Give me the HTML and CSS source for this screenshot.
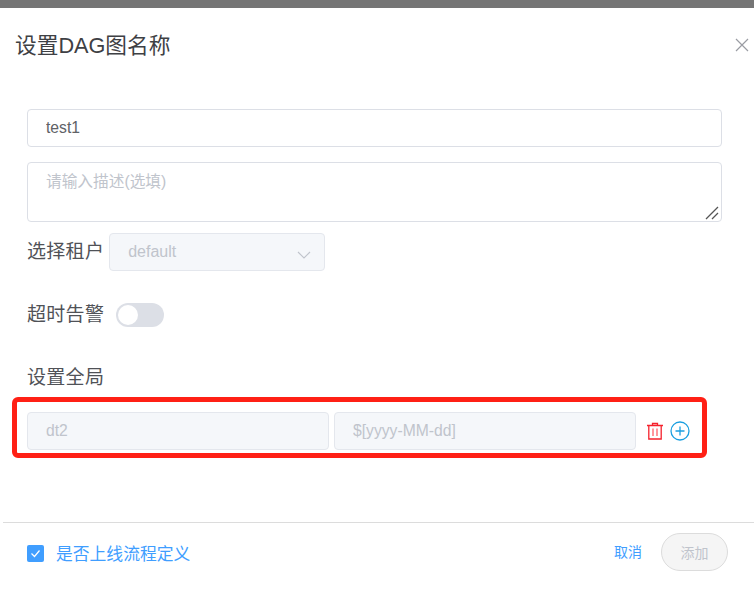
FILE: index.html
```html
<!DOCTYPE html>
<html lang="en">
<head>
    <meta charset="UTF-8">
    <meta name="viewport" content="width=device-width, initial-scale=1.0">
    <title>设置DAG图名称</title>
    <link rel="stylesheet" href="styles.css">
</head>
<body>
    <div class="mask-bar"></div>
    <div class="dialog">
        <div class="header">
            <h2 class="title">设置DAG图名称</h2>
            <svg class="close" width="14" height="14" viewBox="0 0 14 14">
                <path d="M1 1L13 13M13 1L1 13" stroke="#9a9ca3" stroke-width="1.2" fill="none"/>
            </svg>
        </div>

        <div class="form">
            <input class="field name-field" type="text" value="test1">
            <div class="desc-box">
                <textarea class="field desc-field" placeholder="请输入描述(选填)"></textarea>
                <svg class="resizer" width="14" height="14" viewBox="0 0 14 14">
                    <path d="M1 13L13 1M7 13L13 7" stroke="#555" stroke-width="1.3" fill="none"/>
                </svg>
            </div>

            <div class="row tenant-row">
                <span class="label">选择租户</span>
                <div class="select">
                    <span>default</span>
                    <svg class="arrow" width="14" height="8" viewBox="0 0 14 8">
                        <path d="M1 1L7 7L13 1" stroke="#c0c4cc" stroke-width="1.1" fill="none"/>
                    </svg>
                </div>
            </div>

            <div class="row alarm-row">
                <span class="label">超时告警</span>
                <span class="switch"><span class="knob"></span></span>
            </div>

            <div class="label global-label">设置全局</div>

            <div class="highlight">
                <input class="field global-field" type="text" placeholder="dt2" disabled>
                <input class="field global-field value-field" type="text" placeholder="$[yyyy-MM-dd]" disabled>
                <svg class="trash" width="18" height="18" viewBox="0 0 18 18" fill="none" stroke="#f5222d" stroke-width="1.3">
                    <path d="M1 3.5H17M6.5 3.5V1.5H11.5V3.5M2.8 3.5V17H15.2V3.5"/>
                    <path d="M7 6.5V14M11 6.5V14" stroke="#ff7d85" stroke-width="1.6"/>
                </svg>
                <svg class="plus" width="20" height="20" viewBox="0 0 20 20" fill="none" stroke="#1a9fe0" stroke-width="1.3">
                    <circle cx="10" cy="10" r="9"/>
                    <path d="M5.5 10H14.5M10 5.5V14.5"/>
                </svg>
            </div>
        </div>

        <div class="footer">
            <label class="online">
                <span class="checkbox">
                    <svg width="17" height="17" viewBox="0 0 17 17">
                        <path d="M4.5 8.5L7.5 11.5L12.5 5.5" stroke="#fff" stroke-width="1.2" fill="none"/>
                    </svg>
                </span>
                <span>是否上线流程定义</span>
            </label>
            <a class="cancel">取消</a>
            <button class="add" disabled>添加</button>
        </div>
    </div>
</body>
</html>
```

FILE: styles.css
```css
*{
    box-sizing: border-box;
    margin: 0;
    padding: 0;
    font-family: "Liberation Sans", "Noto Sans CJK SC", sans-serif;
}
body{
    width: 754px;
    height: 597px;
    overflow: hidden;
    background-color: #fff;
}
.mask-bar{
    height: 8px;
    background-color: #757575;
}
.header{
    display: flex;
    align-items: center;
    justify-content: space-between;
    height: 74px;
    padding: 0 5px 0 15px;
}
.title{
    margin-top: 2px;
    font-size: 21.7px;
    font-weight: normal;
    line-height: 30px;
    color: #3e4044;
}
.form{
    padding: 27px 32px 0 27px;
}
.field{
    display: block;
    width: 100%;
    height: 38px;
    padding: 0 18px;
    font-size: 15.7px;
    color: #606266;
    background-color: #fff;
    border: 1px solid #dcdfe6;
    border-radius: 4px;
    outline: none;
}
.field::placeholder{
    color: #c0c4cc;
    opacity: 1;
}
.desc-box{
    position: relative;
    margin-top: 15px;
}
.desc-field{
    height: 60px;
    padding: 8px 18px;
    line-height: 21px;
    resize: none;
}
.resizer{
    position: absolute;
    right: 3px;
    bottom: 2px;
}
.row{
    display: flex;
    align-items: center;
}
.label{
    font-size: 19px;
    line-height: 24px;
    letter-spacing: 0.3px;
    color: #505257;
}
.tenant-row{
    gap: 5px;
    margin-top: 11px;
}
.select{
    display: flex;
    align-items: center;
    justify-content: space-between;
    width: 216px;
    height: 38px;
    padding: 0 13px 0 18px;
    font-size: 16px;
    color: #c0c4cc;
    background-color: #f5f7fa;
    border: 1px solid #e4e7ed;
    border-radius: 4px;
}
.arrow{
    margin-top: 6px;
}
.alarm-row{
    gap: 12px;
    margin-top: 32px;
}
.switch{
    display: block;
    width: 48px;
    height: 24px;
    padding: 2px;
    background-color: #dcdfe6;
    border-radius: 12px;
}
.knob{
    display: block;
    width: 20px;
    height: 20px;
    background-color: #fff;
    border-radius: 50%;
}
.global-label{
    margin-top: 39px;
}
.highlight{
    display: flex;
    align-items: center;
    width: 695px;
    height: 61px;
    margin: 7px 0 0 -15px;
    padding: 10px 0 3px 10px;
    border: 5px solid #ff2015;
    border-radius: 6px;
}
.global-field{
    flex: none;
    width: 302px;
    background-color: #f5f7fa;
    border-color: #e4e7ed;
}
.value-field{
    margin-left: 5px;
}
.trash{
    margin-left: 10px;
}
.plus{
    margin-left: 6px;
}
.footer{
    display: flex;
    align-items: center;
    height: 61px;
    margin: 64px 0 0 3px;
    padding: 0 26px 0 24px;
    border-top: 1px solid #dcdcdc;
}
.online{
    display: flex;
    align-items: center;
    gap: 12px;
    font-size: 16.8px;
    color: #409eff;
    margin-right: auto;
}
.checkbox{
    display: block;
    width: 17px;
    height: 17px;
    background-color: #409eff;
    border-radius: 2px;
}
.checkbox svg{
    display: block;
}
.cancel{
    margin-bottom: 4px;
    font-size: 14px;
    color: #409eff;
}
.add{
    width: 67px;
    height: 38px;
    margin: 0 0 2px 19px;
    font-size: 14px;
    color: #c0c4cc;
    background-color: #f5f5f5;
    border: 1px solid #dcdcdc;
    border-radius: 19px;
}
```
